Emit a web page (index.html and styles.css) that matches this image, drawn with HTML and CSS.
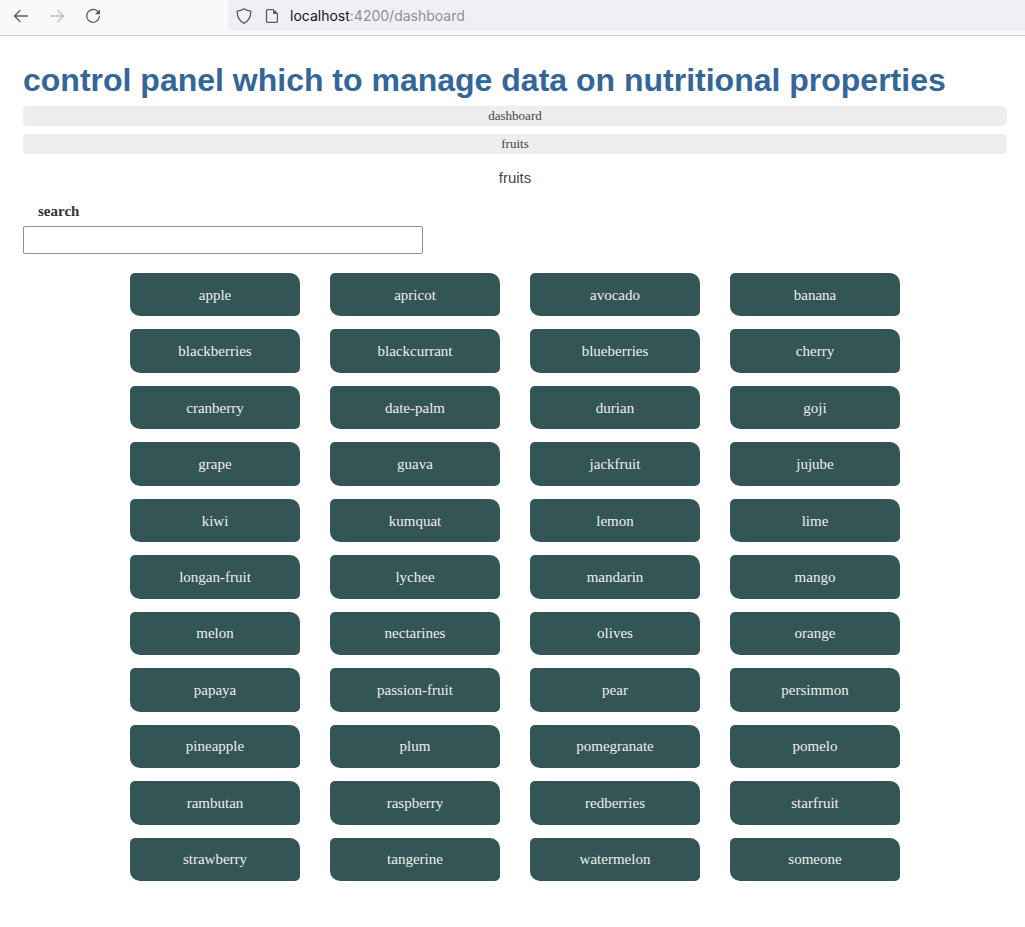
FILE: index.html
```html
<!DOCTYPE html>
<html lang="en">
<head>
<meta charset="utf-8">
<meta name="viewport" content="width=device-width, initial-scale=1">
<title>dashboard</title>
<link rel="stylesheet" href="styles.css">
</head>
<body>
<header class="toolbar">
  <div class="nav-buttons">
    <button class="icon-button" type="button" aria-label="Back">
      <svg class="icon" viewBox="0 0 16 16"><path d="M14.500 8H1.5M7 2.500L1.5 8l5.500 5.500"/></svg>
    </button>
    <button class="icon-button" type="button" aria-label="Forward" disabled>
      <svg class="icon" viewBox="0 0 16 16"><path d="M1.500 8h13M9 2.500L14.500 8 9 13.500"/></svg>
    </button>
    <button class="icon-button" type="button" aria-label="Reload">
      <svg class="icon" viewBox="0 0 16 16"><path d="M12.800 3.600A6.400 6.400 0 1 0 14.400 8.500"/><path class="solid" d="M15 1.200v5H10z"/></svg>
    </button>
  </div>
  <div class="address">
    <div class="site-icons">
      <svg class="icon" viewBox="0 0 16 16"><path d="M8 .7c2 1.500 4.300 2.200 6.800 2.400C15 8.500 13.500 12.500 8 15.400 2.500 12.500 1 8.500 1.200 3.100 3.700 2.900 6 2.200 8 .7z"/></svg>
      <svg class="icon" viewBox="0 0 16 16"><path d="M3.500 1.600h5.700l4.200 4.200v7.600a1 1 0 0 1-1 1H3.500a1 1 0 0 1-1-1V2.600a1 1 0 0 1 1-1z"/><path class="solid" d="M9 1.600v4.400h4.400z"/></svg>
    </div>
    <span class="url"><span class="host">localhost</span>:4200/dashboard</span>
  </div>
</header>
<main class="page">
  <h1 class="title">control panel which to manage data on nutritional properties</h1>
  <nav class="menu">
    <a class="menu-link" href="#dashboard">dashboard</a>
    <a class="menu-link" href="#fruits">fruits</a>
  </nav>
  <h2 class="subtitle">fruits</h2>
  <div class="search">
    <label class="search-label" for="search">search</label>
    <input class="search-box" id="search" type="text">
  </div>
  <div class="fruits">
    <a class="fruit" href="#apple">apple</a>
    <a class="fruit" href="#apricot">apricot</a>
    <a class="fruit" href="#avocado">avocado</a>
    <a class="fruit" href="#banana">banana</a>
    <a class="fruit" href="#blackberries">blackberries</a>
    <a class="fruit" href="#blackcurrant">blackcurrant</a>
    <a class="fruit" href="#blueberries">blueberries</a>
    <a class="fruit" href="#cherry">cherry</a>
    <a class="fruit" href="#cranberry">cranberry</a>
    <a class="fruit" href="#date-palm">date-palm</a>
    <a class="fruit" href="#durian">durian</a>
    <a class="fruit" href="#goji">goji</a>
    <a class="fruit" href="#grape">grape</a>
    <a class="fruit" href="#guava">guava</a>
    <a class="fruit" href="#jackfruit">jackfruit</a>
    <a class="fruit" href="#jujube">jujube</a>
    <a class="fruit" href="#kiwi">kiwi</a>
    <a class="fruit" href="#kumquat">kumquat</a>
    <a class="fruit" href="#lemon">lemon</a>
    <a class="fruit" href="#lime">lime</a>
    <a class="fruit" href="#longan-fruit">longan-fruit</a>
    <a class="fruit" href="#lychee">lychee</a>
    <a class="fruit" href="#mandarin">mandarin</a>
    <a class="fruit" href="#mango">mango</a>
    <a class="fruit" href="#melon">melon</a>
    <a class="fruit" href="#nectarines">nectarines</a>
    <a class="fruit" href="#olives">olives</a>
    <a class="fruit" href="#orange">orange</a>
    <a class="fruit" href="#papaya">papaya</a>
    <a class="fruit" href="#passion-fruit">passion-fruit</a>
    <a class="fruit" href="#pear">pear</a>
    <a class="fruit" href="#persimmon">persimmon</a>
    <a class="fruit" href="#pineapple">pineapple</a>
    <a class="fruit" href="#plum">plum</a>
    <a class="fruit" href="#pomegranate">pomegranate</a>
    <a class="fruit" href="#pomelo">pomelo</a>
    <a class="fruit" href="#rambutan">rambutan</a>
    <a class="fruit" href="#raspberry">raspberry</a>
    <a class="fruit" href="#redberries">redberries</a>
    <a class="fruit" href="#starfruit">starfruit</a>
    <a class="fruit" href="#strawberry">strawberry</a>
    <a class="fruit" href="#tangerine">tangerine</a>
    <a class="fruit" href="#watermelon">watermelon</a>
    <a class="fruit" href="#someone">someone</a>
  </div>
</main>
</body>
</html>
```
FILE: styles.css
```css
* {
  box-sizing: border-box;
}

body {
  margin: 0;
  background: #fff;
  color: #333;
  font-family: "Liberation Serif", serif;
  font-size: 15px;
}

.toolbar {
  display: flex;
  height: 36px;
  padding-bottom: 4px;
  border-bottom: 1px solid #cccccf;
  background: #f9f9fb;
}

.nav-buttons {
  display: flex;
  flex: 0 0 228px;
  align-items: center;
  gap: 20px;
  padding-left: 13px;
}

.icon-button {
  display: flex;
  padding: 0;
  border: 0;
  background: none;
  color: #5b5b66;
}

.icon-button:disabled {
  color: #bdbdc2;
}

.icon {
  display: block;
  flex: none;
  width: 16px;
  height: 16px;
  fill: none;
  stroke: currentColor;
  stroke-width: 1.3;
  stroke-linecap: round;
  stroke-linejoin: round;
}

.icon .solid {
  fill: currentColor;
  stroke: none;
}

.address {
  display: flex;
  flex: 1;
  align-items: center;
  gap: 10px;
  padding-left: 8px;
  border-radius: 0 0 0 4px;
  background: #f0f0f4;
  color: #5b5b66;
}

.site-icons {
  display: flex;
  gap: 12px;
}

.url {
  color: #8f8f96;
  font: 14px/20px Inter, sans-serif;
}

.host {
  color: #15141a;
}

.page {
  padding: 26px 18px 46px 23px;
}

.title {
  margin: 0;
  color: #336699;
  font: bold 32px/36px "Liberation Sans", sans-serif;
}

.menu {
  display: flex;
  flex-direction: column;
  gap: 8px;
  margin-top: 8px;
}

.menu-link {
  border-radius: 4px;
  background: #eee;
  color: #444;
  font-size: 13px;
  line-height: 20px;
  text-align: center;
  text-decoration: none;
}

.subtitle {
  margin: 14px 0 0;
  color: #444;
  font: 15px/20px "Liberation Sans", sans-serif;
  text-align: center;
}

.search {
  display: flex;
  flex-direction: column;
  gap: 5px;
  margin-top: 13px;
}

.search-label {
  padding-left: 15px;
  font-weight: bold;
  line-height: 20px;
}

.search-box {
  width: 100%;
  max-width: 400px;
  height: 28px;
  padding: 0 8px;
  border: 1px solid #8f8f9d;
  border-radius: 2px;
  background: #fff;
  font: inherit;
}

.fruits {
  display: grid;
  grid-template-columns: repeat(auto-fit, 170px);
  grid-auto-rows: 1fr;
  justify-content: center;
  gap: 13px 30px;
  min-height: 608px;
  max-width: 800px;
  margin: 19px auto 0;
}

.fruit {
  display: flex;
  align-items: center;
  justify-content: center;
  border-radius: 5px 10px;
  background: #335555;
  color: #eee;
  line-height: 20px;
  text-decoration: none;
}
```
